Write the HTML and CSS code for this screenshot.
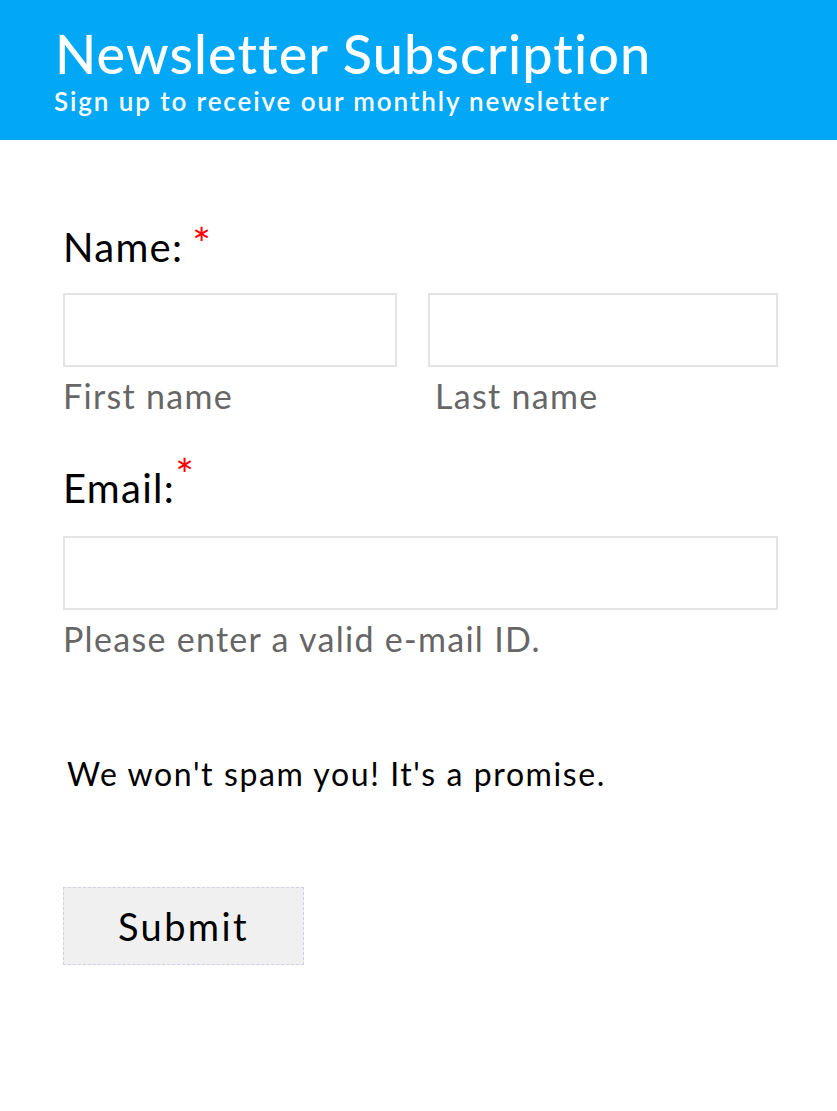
FILE: index.html
```html
<!DOCTYPE html>
<html>
<head>
<meta charset="utf-8">
<link rel="stylesheet" href="styles.css">
</head>
<body>
<header class="banner">
  <h1 class="title">Newsletter Subscription</h1>
  <p class="subtitle">Sign up to receive our monthly newsletter</p>
</header>
<form class="form">
  <div class="field">
    <label class="label">Name:<span class="req req-name">*</span></label>
    <div class="name-row">
      <div class="col">
        <input class="input" type="text">
        <span class="hint">First name</span>
      </div>
      <div class="col">
        <input class="input" type="text">
        <span class="hint hint-last">Last name</span>
      </div>
    </div>
  </div>
  <div class="field field-email">
    <label class="label label-email">Email:<sup class="req sup">*</sup></label>
    <input class="input input-wide" type="text">
    <span class="hint">Please enter a valid e-mail ID.</span>
  </div>
  <p class="promise">We won't spam you! It's a promise.</p>
  <button class="submit" type="button">Submit</button>
</form>
</body>
</html>
```
FILE: styles.css
```css
html, body {
  margin: 0;
  padding: 0;
  background: #ffffff;
}
body {
  font-family: Lato, "Open Sans", sans-serif;
  color: #000;
}
.banner {
  background: #02a8f6;
  height: 140px;
  box-sizing: border-box;
  padding: 24px 0 0 55px;
  color: #fff;
}
.title {
  margin: 0;
  font-size: 54px;
  font-weight: 500;
  line-height: 60px;
  letter-spacing: 1.1px;
}
.subtitle {
  margin: 2px 0 0 -1px;
  font-size: 26px;
  font-weight: 600;
  line-height: 30px;
  letter-spacing: 1.9px;
}
.form {
  padding: 83px 59px 0 63px;
}
.field {
  display: flex;
  flex-direction: column;
}
.label {
  font-size: 40px;
  line-height: 48px;
  height: 48px;
  margin-bottom: 22px;
  letter-spacing: 1.3px;
}
.label-email {
  margin-bottom: 24px;
}
.req {
  color: #f00;
}
.req-name {
  margin-left: 9px;
  font-size: 44px;
  line-height: 0;
  vertical-align: 2px;
}
.sup {
  font-size: 44px;
  vertical-align: 12px;
  line-height: 0;
  margin-left: 0;
}
.name-row {
  display: grid;
  grid-template-columns: 334px 350px;
  column-gap: 31px;
}
.col {
  display: flex;
  flex-direction: column;
}
.input {
  display: block;
  box-sizing: border-box;
  height: 74px;
  width: 100%;
  border: 2px solid #e4e4e4;
  background: #fff;
  margin: 0;
  padding: 0;
  outline: none;
}
.hint {
  font-size: 34px;
  color: #666;
  line-height: 40px;
  margin-top: 9px;
  letter-spacing: 1.3px;
}
.hint-last {
  padding-left: 7px;
}
.field-email {
  margin-top: 48px;
}
.input-wide {
  width: 715px;
}
.promise {
  margin: 95px 0 0 4px;
  font-size: 32px;
  line-height: 40px;
  letter-spacing: 1.6px;
}
.submit {
  margin-top: 93px;
  width: 241px;
  height: 78px;
  background: #f0f0f0;
  border: 1px dashed #cfd3e0;
  font-family: inherit;
  font-size: 38px;
  letter-spacing: 2.4px;
  color: #000;
  padding: 0;
}
```
